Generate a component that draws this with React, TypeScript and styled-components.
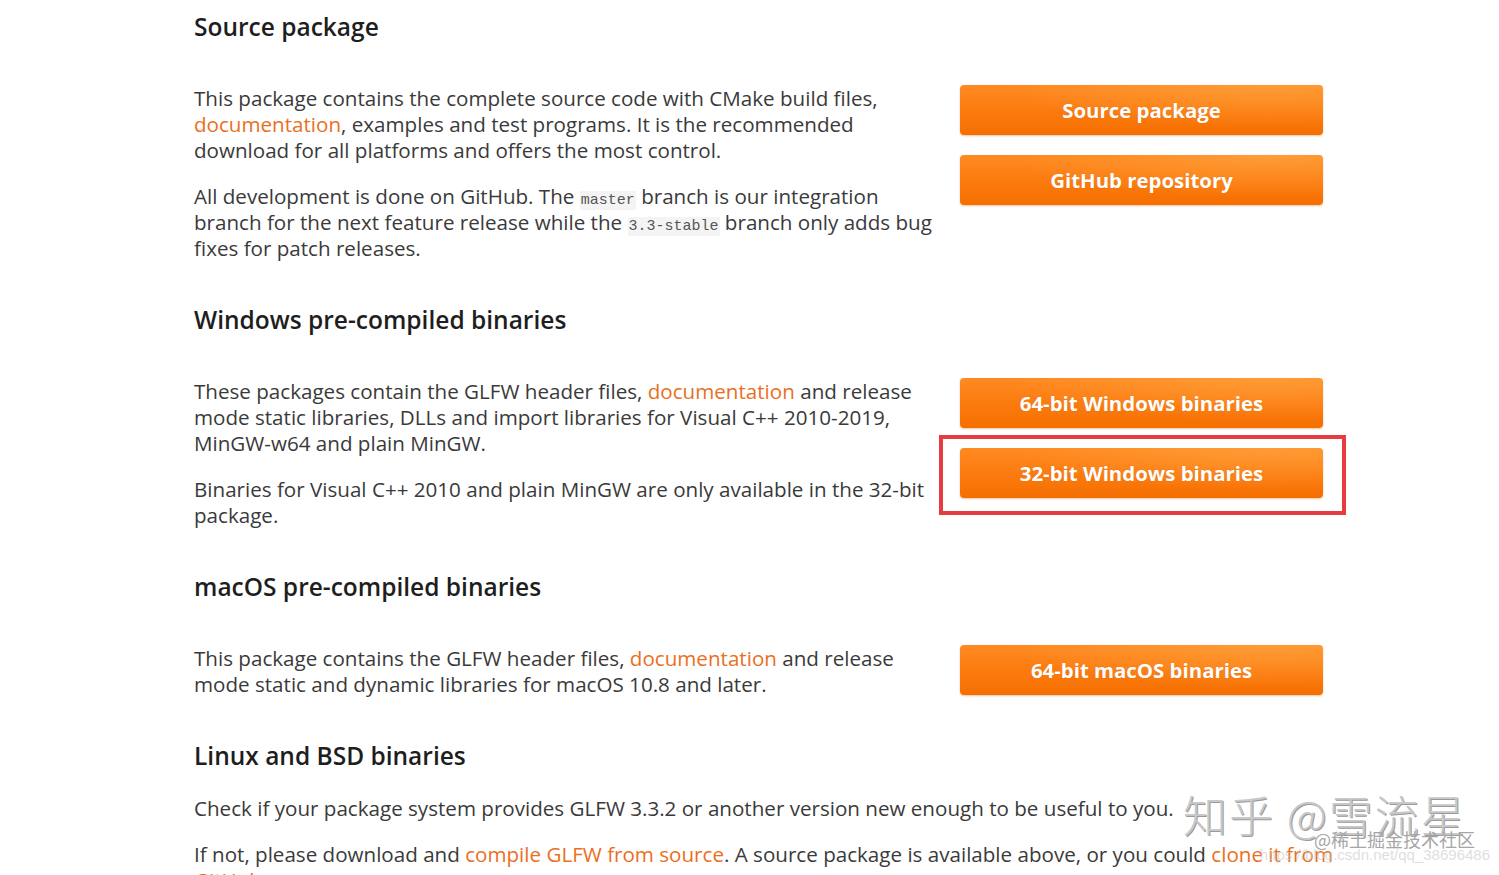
import styled, { createGlobalStyle } from 'styled-components'

const GlobalStyle = createGlobalStyle`
  html, body {
    margin: 0;
    padding: 0;
    background: #ffffff;
    overflow: hidden;
  }
  body {
    font-family: 'Open Sans', 'Noto Sans', 'Noto Sans CJK SC', sans-serif;
    color: #3a3a3a;
  }
`

const Page = styled.div`
  position: relative;
  height: 875px;
  overflow: hidden;
`

const Container = styled.main`
  width: 1180px;
  margin-left: 194px;
`

const Section = styled.section`
  & + & {
    margin-top: 44px;
  }
`

const Heading = styled.h2`
  margin: 12px 0 24px;
  font-size: 24.5px;
  line-height: 30px;
  font-weight: 600;
  color: #1e1e1e;
`

const Row = styled.div`
  display: flex;
  align-items: flex-start;
  gap: 20px;
  padding-top: 19px;
`

const TextCol = styled.div`
  width: 746px;
  flex: none;
`

const ButtonCol = styled.div`
  display: flex;
  flex-direction: column;
  gap: 20px;
  width: 363px;
`

const Para = styled.p`
  margin: 0 0 20px;
  font-size: 20.6px;
  line-height: 26px;
  color: #3a3a3a;
  &:last-child {
    margin-bottom: 0;
  }
`

const Link = styled.a`
  color: #ea6f1e;
  text-decoration: none;
`

const Code = styled.code`
  font-family: 'Liberation Mono', 'DejaVu Sans Mono', monospace;
  font-size: 15px;
  line-height: 1;
  color: #555;
  background: #f4f4f4;
  padding: 1px 1px;
`

const Button = styled.a`
  display: flex;
  align-items: center;
  justify-content: center;
  height: 50px;
  border-radius: 4px;
  background:
    radial-gradient(ellipse at 85% 0%, rgba(255, 170, 70, 0.55), rgba(255, 170, 70, 0) 60%),
    linear-gradient(to bottom, #ff8a22 0%, #fb7a0e 55%, #f56f00 100%);
  box-shadow: 0 1px 2px rgba(200, 90, 0, 0.35);
  color: #ffffff;
  font-size: 20.4px;
  font-weight: 700;
  text-decoration: none;
  text-shadow: 0 0 1px rgba(150, 60, 0, 0.3);
`

const Marked = styled.div`
  position: relative;
`

const MarkBox = styled.span`
  position: absolute;
  top: -13px;
  left: -21px;
  right: -23px;
  bottom: -17px;
  border: 4px solid #e83b40;
  pointer-events: none;
`

const Watermark = styled.div`
  position: absolute;
  left: 1183px;
  top: 782px;
  font-family: 'Noto Sans CJK SC', sans-serif;
  font-size: 44px;
  font-weight: 300;
  letter-spacing: 2px;
  color: #c8c8c8;
  text-shadow: 1px 1px 0 #9a9a9a;
  white-space: nowrap;
`

const WatermarkSub = styled.div`
  position: absolute;
  left: 1314px;
  top: 826px;
  font-family: 'Noto Sans CJK SC', sans-serif;
  font-size: 18px;
  color: #a6a6a6;
  white-space: nowrap;
`

const WatermarkUrl = styled.div`
  position: absolute;
  right: 9px;
  top: 846px;
  font-family: 'Liberation Sans', sans-serif;
  font-size: 15px;
  color: rgba(200, 200, 200, 0.6);
  white-space: nowrap;
`

export default function App() {
  return (
    <Page>
      <GlobalStyle />
      <Container>
        <Section>
          <Heading>Source package</Heading>
          <Row>
            <TextCol>
              <Para>
                This package contains the complete source code with CMake build files,<br />
                <Link>documentation</Link>, examples and test programs. It is the recommended<br />
                download for all platforms and offers the most control.
              </Para>
              <Para>
                All development is done on GitHub. The <Code>master</Code> branch is our integration<br />
                branch for the next feature release while the <Code>3.3-stable</Code> branch only adds bug<br />
                fixes for patch releases.
              </Para>
            </TextCol>
            <ButtonCol>
              <Button>Source package</Button>
              <Button>GitHub repository</Button>
            </ButtonCol>
          </Row>
        </Section>

        <Section>
          <Heading>Windows pre-compiled binaries</Heading>
          <Row>
            <TextCol>
              <Para>
                These packages contain the GLFW header files, <Link>documentation</Link> and release<br />
                mode static libraries, DLLs and import libraries for Visual C++ 2010-2019,<br />
                MinGW-w64 and plain MinGW.
              </Para>
              <Para>
                Binaries for Visual C++ 2010 and plain MinGW are only available in the 32-bit<br />
                package.
              </Para>
            </TextCol>
            <ButtonCol>
              <Button>64-bit Windows binaries</Button>
              <Marked>
                <Button>32-bit Windows binaries</Button>
                <MarkBox />
              </Marked>
            </ButtonCol>
          </Row>
        </Section>

        <Section>
          <Heading>macOS pre-compiled binaries</Heading>
          <Row>
            <TextCol>
              <Para>
                This package contains the GLFW header files, <Link>documentation</Link> and release<br />
                mode static and dynamic libraries for macOS 10.8 and later.
              </Para>
            </TextCol>
            <ButtonCol>
              <Button>64-bit macOS binaries</Button>
            </ButtonCol>
          </Row>
        </Section>

        <Section>
          <Heading>Linux and BSD binaries</Heading>
          <Para>
            Check if your package system provides GLFW 3.3.2 or another version new enough to be useful to you.
          </Para>
          <Para>
            If not, please download and <Link>compile GLFW from source</Link>. A source package is available above, or you could <Link>clone it from<br />
            GitHub</Link>.
          </Para>
        </Section>
      </Container>
      <Watermark>知乎 @雪流星</Watermark>
      <WatermarkSub>@稀土掘金技术社区</WatermarkSub>
      <WatermarkUrl>https://blog.csdn.net/qq_38696486</WatermarkUrl>
    </Page>
  )
}
